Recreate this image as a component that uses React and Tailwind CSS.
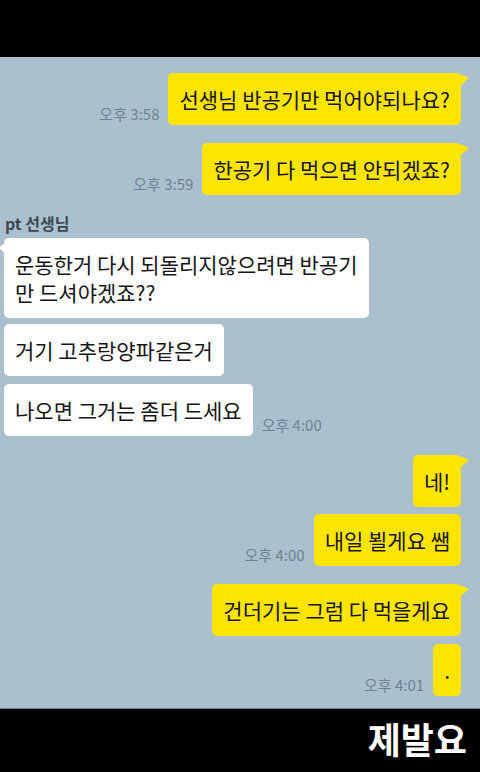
import React from "react";

const FONT = { fontFamily: '"Noto Sans CJK KR", "Noto Sans", sans-serif' };

function Time({ children }) {
  return (
    <span className="text-[15px] leading-none text-[#6f8291] mb-[4px] whitespace-nowrap">
      {children}
    </span>
  );
}

// 노란 말풍선 (내가 보낸 것)
function Mine({ text, time, tail = false, className = "" }) {
  return (
    <div className={`flex justify-end items-end gap-[9px] pr-[19px] ${className}`}>
      {time && <Time>{time}</Time>}
      <div className="relative bg-[#fee500] rounded-[5px] px-[11px] py-[12px] text-[21px] leading-[28px] text-[#151515] whitespace-nowrap">
        {text}
        {tail && (
          <svg
            className="absolute -right-[8px] top-0"
            width="9"
            height="13"
            viewBox="0 0 9 13"
          >
            <polygon points="0,1 9,5 0,13" fill="#fee500" />
          </svg>
        )}
      </div>
    </div>
  );
}

// 흰 말풍선 (상대방)
function Theirs({ children, time, tail = false, className = "" }) {
  return (
    <div className={`flex items-end gap-[9px] pl-[4px] ${className}`}>
      <div className="relative bg-white rounded-[5px] px-[11px] py-[12px] text-[21px] leading-[28px] text-[#151515] whitespace-nowrap">
        {children}
        {tail && (
          <svg
            className="absolute -left-[5px] top-[6px]"
            width="5"
            height="9"
            viewBox="0 0 5 9"
          >
            <polygon points="5,0 0,3 5,9" fill="#ffffff" />
          </svg>
        )}
      </div>
      {time && <Time>{time}</Time>}
    </div>
  );
}

export default function App() {
  return (
    <div className="w-[480px] h-[772px] flex flex-col bg-black overflow-hidden" style={FONT}>
      <div className="h-[57px] shrink-0 bg-black" />

      <div className="h-[652px] shrink-0 bg-[#aac0ce] pt-[16px] flex flex-col border-b border-[#6c7c88]">
        <Mine text="선생님 반공기만 먹어야되나요?" time="오후 3:58" tail />
        <Mine className="mt-[18px]" text="한공기 다 먹으면 안되겠죠?" time="오후 3:59" tail />

        <div className="mt-[18px] pl-[5px] text-[16px] leading-[20px] font-bold text-[#3b4954]">
          pt 선생님
        </div>

        <Theirs className="mt-[5px]" tail>
          운동한거 다시 되돌리지않으려면 반공기
          <br />만 드셔야겠죠??
        </Theirs>
        <Theirs className="mt-[6px]">거기 고추랑양파같은거</Theirs>
        <Theirs className="mt-[8px]" time="오후 4:00">
          나오면 그거는 좀더 드세요
        </Theirs>

        <Mine className="mt-[19px]" text="네!" tail />
        <Mine className="mt-[7px]" text="내일 뵐게요 쌤" time="오후 4:00" />
        <Mine className="mt-[18px]" text="건더기는 그럼 다 먹을게요" tail />
        <Mine className="mt-[8px]" text="." time="오후 4:01" />
      </div>

      <div className="flex-1 flex items-center justify-end pr-[13px] pb-[6px]">
        <span className="text-white text-[36px] font-bold leading-none">제발요</span>
      </div>
    </div>
  );
}
